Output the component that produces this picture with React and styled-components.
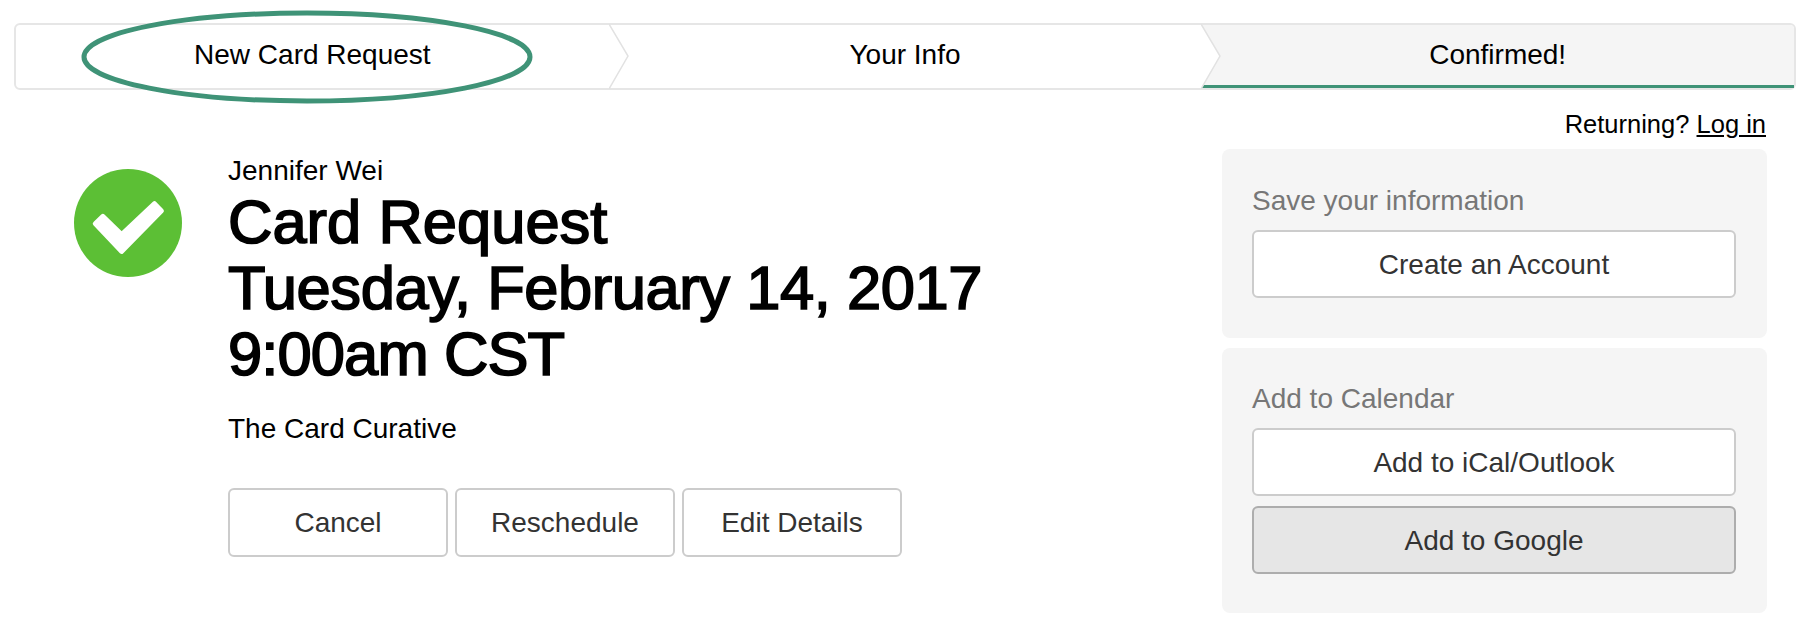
import React from "react";
import styled, { createGlobalStyle } from "styled-components";

const GlobalStyle = createGlobalStyle`
    body {
        margin: 0;
        background-color: #fff;
        font-family: "Liberation Sans", Arial, sans-serif;
        color: #000;
    }
`

const Page = styled.div`
    width: 1814px;
    height: 640px;
    overflow: hidden;
    padding: 23px 18px 0 14px;
    box-sizing: border-box;
`

const StepBar = styled.div`
    position: relative;
    display: grid;
    grid-template-columns: repeat(3, 1fr);
    height: 67px;
    border: solid 2px #e6e6e6;
    border-radius: 6px;
    box-sizing: border-box;
`

const Step = styled.div`
    position: relative;
    display: flex;
    align-items: center;
    justify-content: center;
    font-size: 28px;
    padding-bottom: ${props => (props.$active ? "1px" : "3px")};
    background-color: ${props => (props.$active ? "#f5f5f5" : "transparent")};
    border-bottom: ${props => (props.$active ? "solid 3px #3f9377" : "none")};
    border-radius: ${props => (props.$active ? "0 4px 0 0" : "0")};
`

const Chevron = styled.svg`
    position: absolute;
    top: -1px;
    right: -20px;
    width: 20px;
    height: 65px;
    z-index: 1;
`

const Oval = styled.svg`
    position: absolute;
    left: 65px;
    top: -15px;
    width: 452px;
    height: 94px;
    z-index: 2;
`

const ReturningLine = styled.div`
    margin: 20px 0 0;
    font-size: 25.5px;
    line-height: 28px;
    text-align: right;
    padding-right: 30px;
`

const LogIn = styled.a`
    color: #000;
    text-decoration: underline;
`

const Content = styled.div`
    display: flex;
    justify-content: space-between;
    margin-top: 11px;
    padding-right: 29px;
`

const Summary = styled.div`
    display: flex;
    padding-left: 60px;
    gap: 46px;
`

const CheckIcon = styled.svg`
    width: 108px;
    height: 108px;
    margin-top: 20px;
    flex-shrink: 0;
`

const Details = styled.div`
    display: flex;
    flex-direction: column;
    padding-top: 6px;
`

const Person = styled.div`
    font-size: 28px;
    line-height: 32px;
`

const Heading = styled.h1`
    margin: 2px 0 0;
    font-size: 61.5px;
    font-weight: normal;
    line-height: 66px;
    -webkit-text-stroke: 1.7px #000;
`

const HeadingLine = styled.span`
    display: block;
    white-space: nowrap;
    letter-spacing: ${props => props.$tracking || "0"};
`

const Place = styled.div`
    margin-top: 26px;
    font-size: 28px;
    line-height: 32px;
`

const Actions = styled.div`
    display: flex;
    gap: 7px;
    margin-top: 43px;
`

const Button = styled.button`
    display: block;
    width: 220px;
    height: 69px;
    padding: 0;
    font-family: inherit;
    font-size: 28px;
    color: #333;
    background-color: ${props => (props.$pressed ? "#e6e6e6" : "#fff")};
    border: solid 2px ${props => (props.$pressed ? "#adadad" : "#ccc")};
    border-radius: 6px;
`

const WideButton = styled(Button)`
    width: 484px;
    height: 68px;
    padding-top: 2px;
    margin-top: ${props => (props.$spaced ? "10px" : "0")};
`

const Sidebar = styled.div`
    display: flex;
    flex-direction: column;
    gap: 10px;
    width: 545px;
`

const Card = styled.div`
    display: flex;
    flex-direction: column;
    height: ${props => props.$height};
    padding: ${props => props.$top} 30px 0;
    background-color: #f5f5f5;
    border-radius: 8px;
    box-sizing: border-box;
`

const CardTitle = styled.div`
    font-size: 28px;
    line-height: 32px;
    color: #777;
    margin-bottom: 13px;
`

function App() {
    return (
        <Page>
            <GlobalStyle />
            <StepBar>
                <Oval viewBox="0 0 452 94">
                    <ellipse cx="226" cy="47" rx="223" ry="44" fill="none" stroke="#3f9377" strokeWidth="5" />
                </Oval>
                <Step>
                    New Card Request
                    <Chevron viewBox="0 0 20 65">
                        <polyline points="0,0 19,32 0,65" fill="#fff" stroke="#e2e2e2" strokeWidth="1.5" />
                    </Chevron>
                </Step>
                <Step>
                    Your Info
                    <Chevron viewBox="0 0 20 65">
                        <polyline points="0,0 19,32 0,65" fill="#fff" stroke="#e2e2e2" strokeWidth="1.5" />
                    </Chevron>
                </Step>
                <Step $active>Confirmed!</Step>
            </StepBar>

            <ReturningLine>
                Returning? <LogIn href="#">Log in</LogIn>
            </ReturningLine>

            <Content>
                <Summary>
                    <CheckIcon viewBox="72 87 322 322">
                        <circle cx="233" cy="248" r="161" fill="#5cbf35" />
                        <polygon
                            points="135,250 158,228 214,282 312,190 333,212 214,333"
                            fill="#fff"
                            stroke="#fff"
                            strokeWidth="14"
                            strokeLinejoin="round"
                        />
                    </CheckIcon>
                    <Details>
                        <Person>Jennifer Wei</Person>
                        <Heading>
                            <HeadingLine>Card Request</HeadingLine>
                            <HeadingLine $tracking="-0.45px">Tuesday, February 14, 2017</HeadingLine>
                            <HeadingLine $tracking="-0.9px">9:00am CST</HeadingLine>
                        </Heading>
                        <Place>The Card Curative</Place>
                        <Actions>
                            <Button>Cancel</Button>
                            <Button>Reschedule</Button>
                            <Button>Edit Details</Button>
                        </Actions>
                    </Details>
                </Summary>

                <Sidebar>
                    <Card $height="189px" $top="36px">
                        <CardTitle>Save your information</CardTitle>
                        <WideButton>Create an Account</WideButton>
                    </Card>
                    <Card $height="265px" $top="35px">
                        <CardTitle>Add to Calendar</CardTitle>
                        <WideButton>Add to iCal/Outlook</WideButton>
                        <WideButton $pressed $spaced>Add to Google</WideButton>
                    </Card>
                </Sidebar>
            </Content>
        </Page>
    )
}

export default App;
